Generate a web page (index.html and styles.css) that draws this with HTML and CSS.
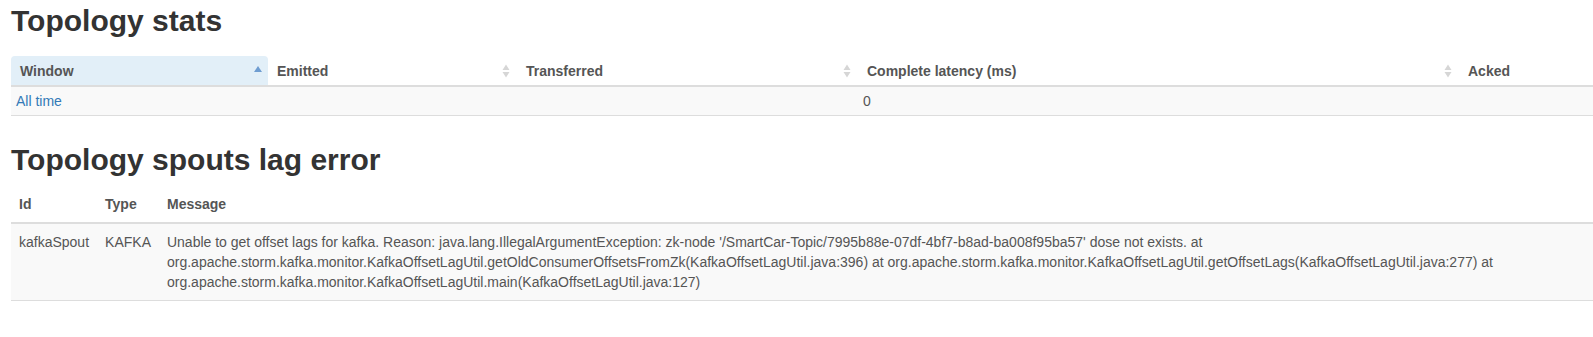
FILE: index.html
```html
<!DOCTYPE html>
<html lang="en">
<head>
  <meta charset="UTF-8">
  <title>Storm UI – Topology</title>
  <link rel="stylesheet" href="styles.css">
</head>
<body>

  <h2 class="first">Topology stats</h2>
  <table class="stats">
    <colgroup>
      <col class="c-window">
      <col class="c-emitted">
      <col class="c-transferred">
      <col class="c-latency">
      <col>
    </colgroup>
    <thead>
      <tr>
        <th class="sorted">
          <div class="th-inner">Window
            <svg width="10" height="16" viewBox="0 0 10 16"><path d="M1 9 L5 3 L9 9 Z" fill="#6f9dd1"/></svg>
          </div>
        </th>
        <th>
          <div class="th-inner">Emitted
            <svg width="10" height="16" viewBox="0 0 10 16"><path d="M1.5 7 L5 1.5 L8.5 7 Z M1.5 9 L5 14.5 L8.5 9 Z" fill="#d6d6d6"/></svg>
          </div>
        </th>
        <th>
          <div class="th-inner">Transferred
            <svg width="10" height="16" viewBox="0 0 10 16"><path d="M1.5 7 L5 1.5 L8.5 7 Z M1.5 9 L5 14.5 L8.5 9 Z" fill="#d6d6d6"/></svg>
          </div>
        </th>
        <th>
          <div class="th-inner">Complete latency (ms)
            <svg width="10" height="16" viewBox="0 0 10 16"><path d="M1.5 7 L5 1.5 L8.5 7 Z M1.5 9 L5 14.5 L8.5 9 Z" fill="#d6d6d6"/></svg>
          </div>
        </th>
        <th>
          <div class="th-inner">Acked</div>
        </th>
      </tr>
    </thead>
    <tbody>
      <tr>
        <td><a href="#">All time</a></td>
        <td></td>
        <td></td>
        <td>0</td>
        <td></td>
      </tr>
    </tbody>
  </table>

  <h2 class="second">Topology spouts lag error</h2>
  <table class="lag">
    <thead>
      <tr>
        <th>Id</th>
        <th>Type</th>
        <th>Message</th>
      </tr>
    </thead>
    <tbody>
      <tr>
        <td>kafkaSpout</td>
        <td>KAFKA</td>
        <td>Unable to get offset lags for kafka. Reason: java.lang.IllegalArgumentException: zk-node '/SmartCar-Topic/7995b88e-07df-4bf7-b8ad-ba008f95ba57' dose not exists. at org.apache.storm.kafka.monitor.KafkaOffsetLagUtil.getOldConsumerOffsetsFromZk(KafkaOffsetLagUtil.java:396) at org.apache.storm.kafka.monitor.KafkaOffsetLagUtil.getOffsetLags(KafkaOffsetLagUtil.java:277) at org.apache.storm.kafka.monitor.KafkaOffsetLagUtil.main(KafkaOffsetLagUtil.java:127)</td>
      </tr>
    </tbody>
  </table>

</body>
</html>
```

FILE: styles.css
```css
body {
  margin: 0;
  padding: 0 0 0 11px;
  font-family: "Liberation Sans", Arial, sans-serif;
  font-size: 14px;
  line-height: 20px;
  color: #333;
  background: #fff;
}
h2 {
  font-size: 30px;
  line-height: 33px;
  font-weight: bold;
  color: #333;
}
h2.first { margin: 4px 0 19px; }
h2.second { margin: 27px 0 10px; }

table {
  width: 100%;
  border-collapse: collapse;
  border-spacing: 0;
}
th {
  text-align: left;
  font-weight: bold;
  color: #555;
}
td { color: #555; }
a { color: #337ab7; text-decoration: none; }

/* topology stats */
.stats { table-layout: fixed; }
.c-window { width: 257px; }
.c-emitted { width: 249px; }
.c-transferred { width: 341px; }
.c-latency { width: 601px; }
.stats th {
  padding: 5px 8px 4px 9px;
  border-bottom: 2px solid #ddd;
}
.stats th.sorted {
  background-color: #e2eff8;
  border-radius: 4px 4px 0 0;
  padding-right: 5px;
}
.th-inner {
  display: flex;
  justify-content: space-between;
  align-items: center;
}
.stats th:nth-child(2) .th-inner,
.stats th:nth-child(3) .th-inner,
.stats th:nth-child(4) .th-inner { margin-right: -2px; }
.stats td {
  padding: 4px 5px;
  background: #f9f9f9;
  border-bottom: 1px solid #ddd;
}

/* spouts lag */
.lag th {
  padding: 8px;
  border-bottom: 2px solid #ddd;
}
.lag td {
  padding: 8px;
  vertical-align: top;
  background: #f9f9f9;
  border-bottom: 1px solid #ddd;
}
.lag td:first-child,
.lag td:nth-child(2) { white-space: nowrap; }
```
